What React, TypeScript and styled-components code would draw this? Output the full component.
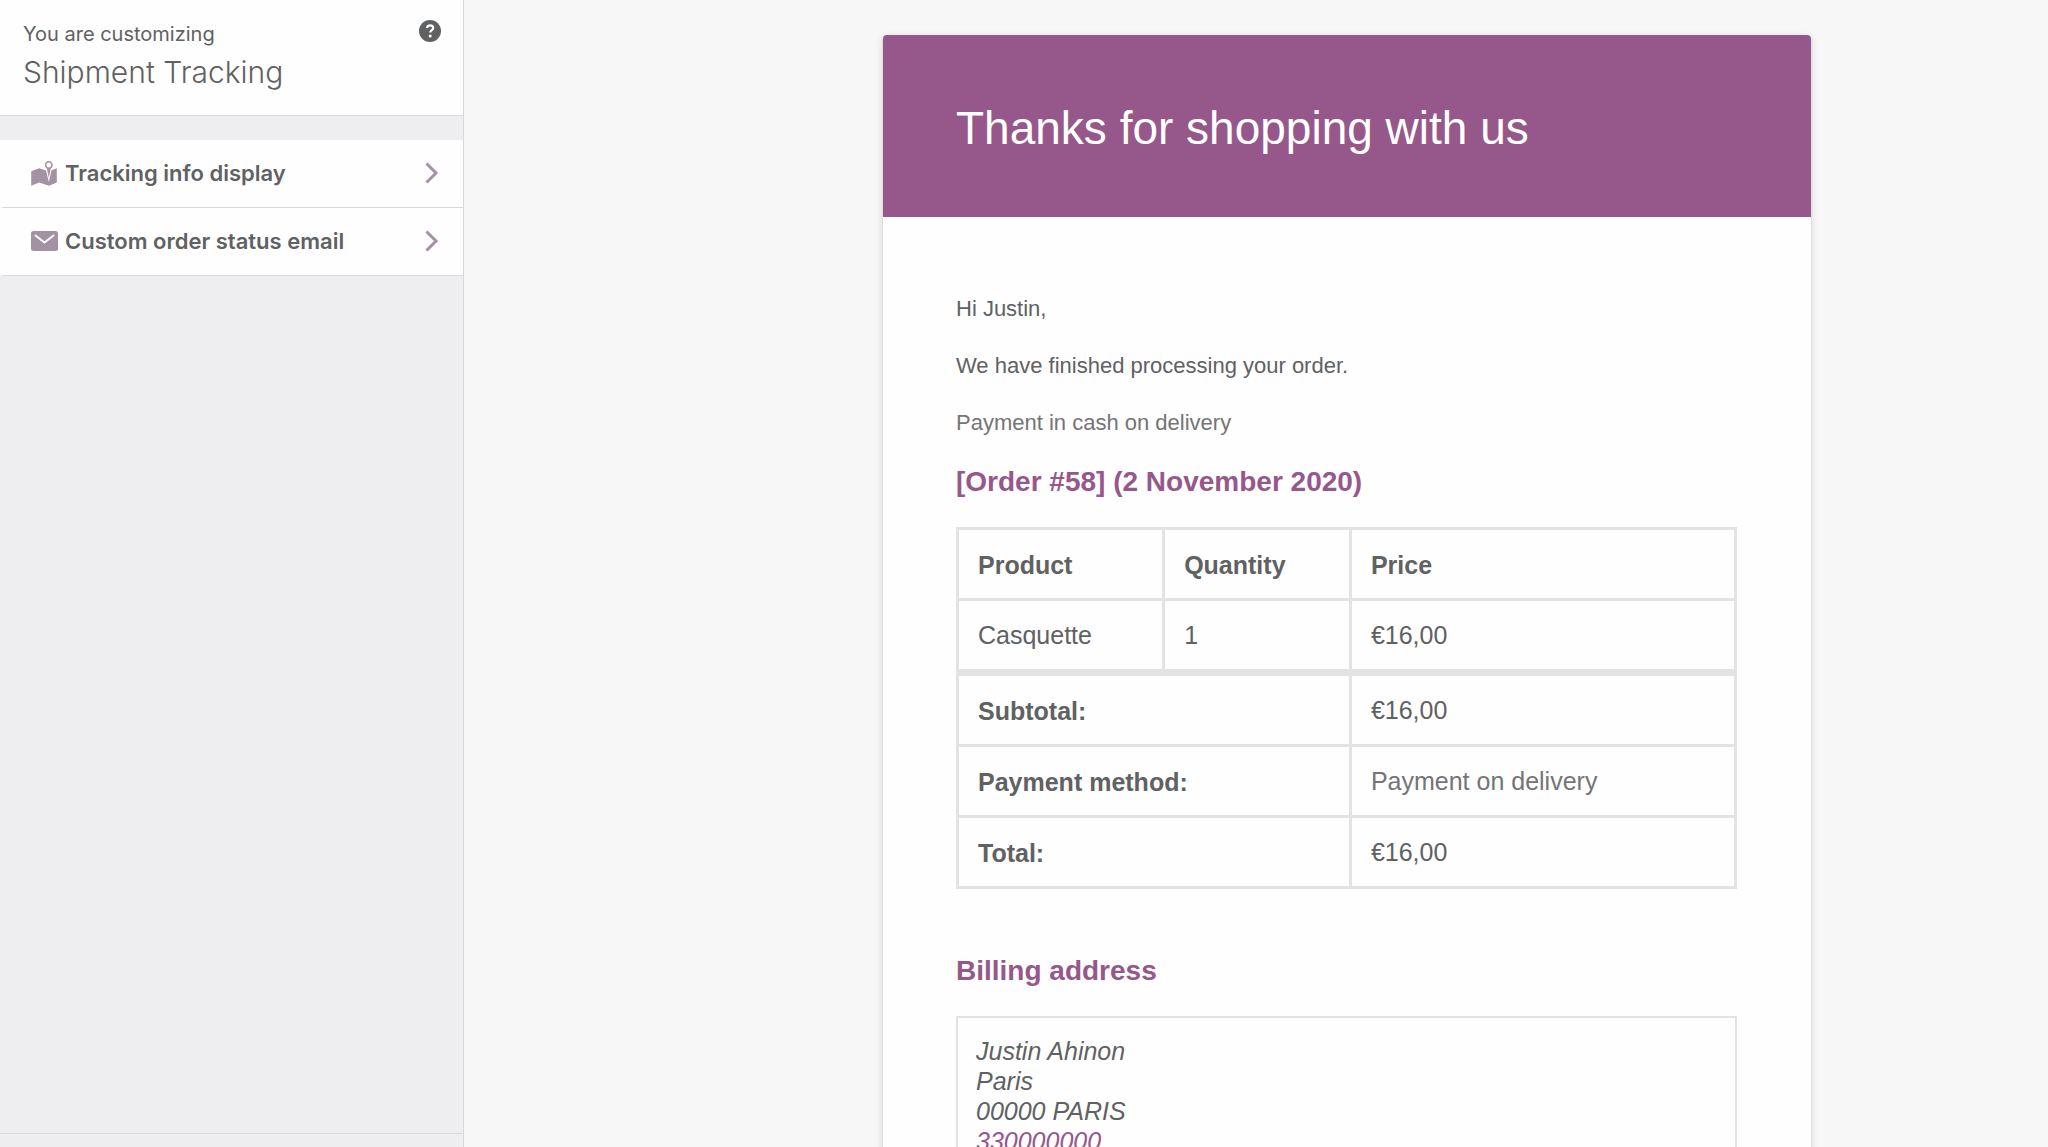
import React from "react";
import styled, { createGlobalStyle } from "styled-components";

const color = {
  purple: "#96588a",
  text: "#5f6163",
  muted: "#757477",
  line: "#e3e3e3",
  edge: "#d8d8da",
  icon: "#a392a3",
};

const sans = '"Liberation Sans", Arial, sans-serif';
const ui = 'Inter, "Noto Sans", sans-serif';

const GlobalStyle = createGlobalStyle`
  *, *::before, *::after { box-sizing: border-box; }
  body { margin: 0; background: #f7f7f7; color: ${color.text}; font-family: ${sans}; }
  h1, h2, p { margin: 0; }
`;

const Page = styled.div`
  display: grid;
  grid-template-columns: 464px minmax(0, 1fr);
  height: 100vh;
  overflow: hidden;
`;

const Sidebar = styled.aside`
  display: flex;
  flex-direction: column;
  background: #eeeef0;
  border-right: 1px solid ${color.edge};
  font-family: ${ui};
`;

const SidebarHeader = styled.header`
  display: flex;
  justify-content: space-between;
  align-items: flex-start;
  padding: 20px 22px 22px 23px;
  background: #fefefe;
  border-bottom: 1px solid ${color.edge};
`;

const Eyebrow = styled.p`
  font-size: 20px;
  line-height: 28px;
`;

const PanelTitle = styled.h1`
  padding-top: 4px;
  font-size: 30px;
  font-weight: 300;
  line-height: 41px;
`;

const HelpButton = styled.button`
  display: flex;
  padding: 0;
  border: 0;
  background: none;
  color: ${color.text};
  cursor: pointer;
`;

const Menu = styled.nav`
  flex: 1;
  padding-top: 24px;
`;

const MenuButton = styled.button`
  display: flex;
  align-items: center;
  gap: 5px;
  width: 100%;
  height: 68px;
  padding: 0 21px 2px 24px;
  border: 0;
  border-left: 4px solid #fefefe;
  border-bottom: 1px solid ${color.edge};
  background: #fefefe;
  color: ${color.text};
  font-family: ${ui};
  font-size: 22px;
  font-weight: 600;
  text-align: left;
  cursor: pointer;

  svg { flex: none; color: ${color.icon}; }
`;

const MenuLabel = styled.span`
  flex: 1;
`;

const SidebarFooter = styled.footer`
  height: 14px;
  border-top: 1px solid ${color.edge};
`;

const Preview = styled.main`
  display: grid;
  grid-template-columns: minmax(24px, 418fr) minmax(0, 930px) minmax(24px, 236fr);
  padding-top: 35px;
  overflow: hidden;
`;

const Email = styled.article`
  grid-column: 2;
  background: #fefefe;
  border: 1px solid #dedede;
  border-top: 0;
  border-radius: 5px 5px 0 0;
  box-shadow: 0 1px 6px rgba(0, 0, 0, 0.12);
`;

const EmailHeader = styled.header`
  padding: 60px 73px 56px;
  background: ${color.purple};
  border-radius: 4px 4px 0 0;
  color: #fff;
`;

const EmailTitle = styled.h2`
  font-size: 46px;
  font-weight: 300;
  line-height: 66px;
`;

const EmailBody = styled.div`
  padding: 75px 74px 75px 73px;
`;

const Paragraph = styled.p<{ $muted?: boolean }>`
  margin-bottom: 24px;
  color: ${(p) => (p.$muted ? color.muted : color.text)};
  font-size: 22px;
  line-height: 33px;
`;

const SectionTitle = styled.h2`
  padding-top: 1px;
  margin-bottom: 27px;
  color: ${color.purple};
  font-size: 28px;
  font-weight: 700;
  line-height: 36px;
`;

const OrderTable = styled.table`
  width: 100%;
  margin-bottom: 63px;
  border-collapse: collapse;
  table-layout: fixed;
  font-size: 25px;
  line-height: 30px;
`;

const Column = styled.col<{ $width?: string }>`
  width: ${(p) => p.$width ?? "auto"};
`;

const HeadCell = styled.th`
  padding: 20px 19px 18px;
  border: 3px solid ${color.line};
  font-weight: 700;
  text-align: left;
`;

const Cell = styled.td<{ $muted?: boolean }>`
  padding: 19px;
  border: 3px solid ${color.line};
  color: ${(p) => (p.$muted ? color.muted : color.text)};
`;

const Totals = styled.tfoot`
  tr:first-child > * { border-top-width: 7px; }
`;

const Address = styled.address`
  padding: 18px;
  border: 2px solid ${color.line};
  font-size: 25px;
  font-style: italic;
  line-height: 30px;
`;

const PhoneLink = styled.a`
  color: ${color.purple};
  text-decoration: none;
`;

const MapIcon = () => (
  <svg width="32" height="32" viewBox="0 0 20 20" fill="currentColor" aria-hidden="true">
    <path d="M13 13.14l1.17-5.94c.79-.43 1.33-1.25 1.33-2.2 0-1.38-1.12-2.5-2.5-2.5S10.5 3.62 10.5 5c0 .95.54 1.77 1.33 2.2zm0-9.64c.83 0 1.5.67 1.5 1.5s-.67 1.5-1.5 1.5-1.5-.67-1.5-1.5.67-1.5 1.5-1.5zm1.72 4.8L18 6.97v9L13.12 18 7 15.97l-5 2v-9l5-2 4.27 1.41 1.73 7.3z" />
  </svg>
);

const MailIcon = () => (
  <svg width="32" height="32" viewBox="0 0 32 32" aria-hidden="true">
    <rect x="3" y="6" width="27" height="20" rx="2.5" fill="currentColor" />
    <path d="M7.5 10.5l9 7 9-7" fill="none" stroke="#fefefe" strokeWidth="2" strokeLinecap="round" />
  </svg>
);

const ChevronIcon = () => (
  <svg width="24" height="24" viewBox="0 0 24 24" fill="none" stroke="currentColor" strokeWidth="3" aria-hidden="true">
    <path d="M8.500 2.500l9.500 9.500-9.500 9.500" />
  </svg>
);

const HelpIcon = () => (
  <svg width="22" height="22" viewBox="0 0 22 22" aria-hidden="true">
    <circle cx="11" cy="11" r="11" fill="currentColor" />
    <path d="M8 8c0-1.700 1.300-2.700 3.100-2.700s3.100 1 3.100 2.600c0 2.200-2.900 2.200-2.900 4.600" fill="none" stroke="#fff" strokeWidth="2.200" />
    <circle cx="11.200" cy="15.900" r="1.500" fill="#fff" />
  </svg>
);

const menuItems = [
  { label: "Tracking info display", Icon: MapIcon },
  { label: "Custom order status email", Icon: MailIcon },
];

const totals = [
  { label: "Subtotal:", value: "€16,00" },
  { label: "Payment method:", value: "Payment on delivery", muted: true },
  { label: "Total:", value: "€16,00" },
];

export default function App() {
  return (
    <>
      <GlobalStyle />
      <Page>
        <Sidebar>
          <SidebarHeader>
            <div>
              <Eyebrow>You are customizing</Eyebrow>
              <PanelTitle>Shipment Tracking</PanelTitle>
            </div>
            <HelpButton type="button" aria-label="Help">
              <HelpIcon />
            </HelpButton>
          </SidebarHeader>
          <Menu>
            {menuItems.map(({ label, Icon }) => (
              <MenuButton type="button" key={label}>
                <Icon />
                <MenuLabel>{label}</MenuLabel>
                <ChevronIcon />
              </MenuButton>
            ))}
          </Menu>
          <SidebarFooter />
        </Sidebar>
        <Preview>
          <Email>
            <EmailHeader>
              <EmailTitle>Thanks for shopping with us</EmailTitle>
            </EmailHeader>
            <EmailBody>
              <Paragraph>Hi Justin,</Paragraph>
              <Paragraph>We have finished processing your order.</Paragraph>
              <Paragraph $muted>Payment in cash on delivery</Paragraph>
              <SectionTitle>[Order #58] (2 November 2020)</SectionTitle>
              <OrderTable>
                <colgroup>
                  <Column $width="26.5%" />
                  <Column $width="24%" />
                  <Column />
                </colgroup>
                <thead>
                  <tr>
                    <HeadCell scope="col">Product</HeadCell>
                    <HeadCell scope="col">Quantity</HeadCell>
                    <HeadCell scope="col">Price</HeadCell>
                  </tr>
                </thead>
                <tbody>
                  <tr>
                    <Cell>Casquette</Cell>
                    <Cell>1</Cell>
                    <Cell>€16,00</Cell>
                  </tr>
                </tbody>
                <Totals>
                  {totals.map((row) => (
                    <tr key={row.label}>
                      <HeadCell scope="row" colSpan={2}>{row.label}</HeadCell>
                      <Cell $muted={row.muted}>{row.value}</Cell>
                    </tr>
                  ))}
                </Totals>
              </OrderTable>
              <SectionTitle>Billing address</SectionTitle>
              <Address>
                Justin Ahinon<br />
                Paris<br />
                00000 PARIS<br />
                <PhoneLink href="tel:330000000">330000000</PhoneLink>
              </Address>
            </EmailBody>
          </Email>
        </Preview>
      </Page>
    </>
  );
}
